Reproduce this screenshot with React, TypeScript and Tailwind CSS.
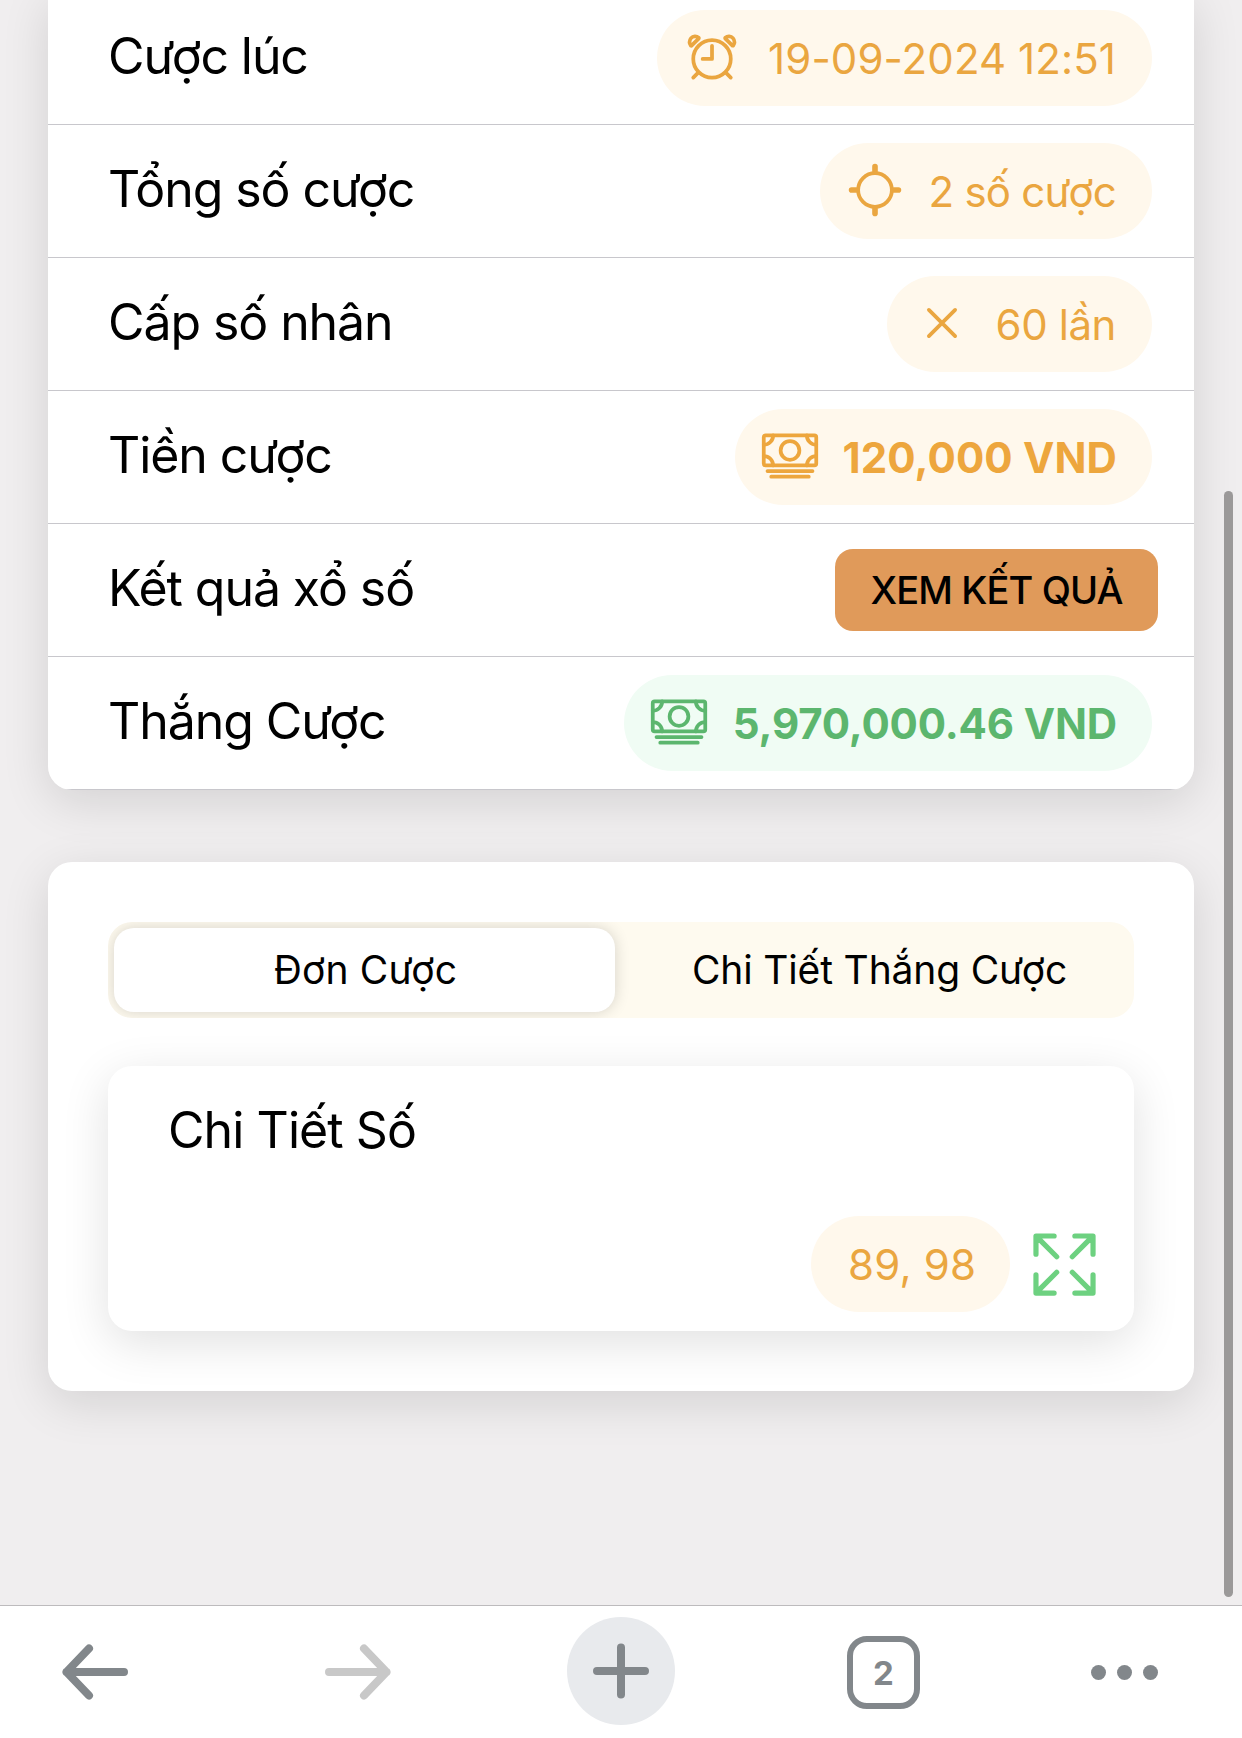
import React from 'react';
import clsx from 'clsx';
import {
  IoAlarmOutline,
  IoCashOutline,
  IoCloseOutline,
  IoExpandOutline,
  IoLocateOutline,
} from 'react-icons/io5';

function Row({
  label,
  children,
}: {
  label: string;
  children: React.ReactNode;
}): React.ReactElement {
  return (
    <div className="flex h-[133px] shrink-0 items-center justify-between border-b border-[#c8c7cc] pr-[42px] pl-[60px]">
      <span className="mb-1 text-[50px] leading-none tracking-[-1.08px] text-black">{label}</span>
      {children}
    </div>
  );
}

function Pill({
  icon,
  className,
  children,
}: {
  icon?: React.ReactNode;
  className?: string;
  children: React.ReactNode;
}): React.ReactElement {
  return (
    <div
      className={clsx(
        'flex h-24 shrink-0 items-center justify-between rounded-full pr-9 text-[42px] leading-none whitespace-nowrap',
        icon ? 'pl-[25px]' : 'pl-[37px]',
        className,
      )}
    >
      {icon}
      <span className="mt-0.5">{children}</span>
    </div>
  );
}

function BetSummary(): React.ReactElement {
  return (
    <section className="-mt-2 overflow-hidden rounded-b-3xl bg-white">
      <Row label="Cược lúc">
        <Pill
          icon={<IoAlarmOutline className="mb-0.5 size-[60px]" />}
          className="w-[495px] bg-[#fff8ec] tracking-[0.1px] text-[#eaa640]"
        >
          19-09-2024 12:51
        </Pill>
      </Row>
      <Row label="Tổng số cược">
        <Pill
          icon={<IoLocateOutline className="mb-0.5 size-[60px]" />}
          className="w-[332px] bg-[#fff8ec] tracking-[-0.75px] text-[#eaa640]"
        >
          2 số cược
        </Pill>
      </Row>
      <Row label="Cấp số nhân">
        <Pill
          icon={<IoCloseOutline className="mb-0.5 size-[60px]" />}
          className="w-[265px] bg-[#fff8ec] tracking-[-0.42px] text-[#eaa640]"
        >
          60 lần
        </Pill>
      </Row>
      <Row label="Tiền cược">
        <Pill
          icon={<IoCashOutline className="mb-0.5 size-[60px]" />}
          className="w-[417px] bg-[#fff8ec] pr-[35px] font-bold tracking-[0.13px] text-[#eda63d]"
        >
          120,000 VND
        </Pill>
      </Row>
      <Row label="Kết quả xổ số">
        <button className="-mr-1.5 h-[82px] w-[323px] rounded-[18px] bg-[#e09a5a] text-[38px] leading-none font-medium tracking-[-0.89px] text-black">
          XEM KẾT QUẢ
        </button>
      </Row>
      <Row label="Thắng Cược">
        <Pill
          icon={<IoCashOutline className="mb-0.5 size-[60px]" />}
          className="w-[528px] bg-[#f0fcf4] pr-[35px] font-bold tracking-[-0.15px] text-[#5cb66e]"
        >
          5,970,000.46 VND
        </Pill>
      </Row>
    </section>
  );
}

function BetDetails(): React.ReactElement {
  return (
    <section className="mt-[72px] h-[529px] rounded-3xl bg-white p-[60px] shadow-[0_12px_48px_rgba(0,0,0,0.12)]">
      <div className="flex h-24 overflow-hidden rounded-3xl bg-[#fefaef] p-1.5 text-[39px] leading-none">
        <button className="w-[501px] rounded-[20px] bg-white pb-0.5 pl-0.5 tracking-[0.14px] shadow-[0_0_15px_rgba(0,0,0,0.16)]">
          Đơn Cược
        </button>
        <button className="ml-4 flex-1 pb-0.5 tracking-[-0.15px]">Chi Tiết Thắng Cược</button>
      </div>
      <div className="mt-12 flex h-[265px] flex-col justify-between rounded-3xl bg-white pt-[39px] pr-7 pb-[19px] pl-[60px] shadow-[0_12px_48px_rgba(0,0,0,0.12)]">
        <h2 className="text-[50px] leading-none tracking-[-0.93px]">Chi Tiết Số</h2>
        <div className="flex items-center justify-end gap-[13px]">
          <Pill className="w-[199px] bg-[#fff8ec] tracking-[0.22px] text-[#eaa640]">89, 98</Pill>
          <IoExpandOutline className="size-[83px] text-[#6dd180]" />
        </div>
      </div>
    </section>
  );
}

function BrowserBar(): React.ReactElement {
  return (
    <nav className="flex h-[133px] shrink-0 items-start border-t border-[#bdbbbd] bg-white pt-[11px] pl-[62px] text-[#82878b]">
      <div className="flex h-[110px] items-center">
        <svg width="68" height="58" viewBox="0 0 68 58" fill="none" stroke="currentColor" strokeWidth="8" strokeLinecap="round" strokeLinejoin="round">
          <path d="M27 5.5 L4.500 29 L27 52.500 M4.500 29 H62" />
        </svg>
      </div>
      <div className="ml-[195px] flex h-[110px] items-center text-[#c8c8c8]">
        <svg width="68" height="58" viewBox="0 0 68 58" fill="none" stroke="currentColor" strokeWidth="8" strokeLinecap="round" strokeLinejoin="round">
          <path d="M39 5.5 L61.500 29 L39 52.500 M61.500 29 H4" />
        </svg>
      </div>
      <div className="ml-[174px] flex size-[108px] items-center justify-center rounded-full bg-[#e8eaed]">
        <svg width="56" height="56" viewBox="0 0 56 56" stroke="currentColor" strokeWidth="8" strokeLinecap="round">
          <path d="M28 4.500 V51.500 M4 28 H52" />
        </svg>
      </div>
      <div className="ml-[172px] flex h-[110px] items-center">
        <div className="flex size-[73px] items-center justify-center rounded-[20px] border-[6px] border-current pt-0.5 text-[33px] leading-none font-bold">
          2
        </div>
      </div>
      <div className="ml-[171px] flex h-[110px] items-center gap-[11px]">
        <span className="size-[15px] rounded-full bg-current" />
        <span className="size-[15px] rounded-full bg-current" />
        <span className="size-[15px] rounded-full bg-current" />
      </div>
    </nav>
  );
}

export default function App(): React.ReactElement {
  return (
    <div className="relative flex h-[1738px] w-[1242px] flex-col overflow-hidden bg-[#f0eeef] font-['Inter','Noto_Sans',sans-serif] text-black">
      <main className="flex-1 px-12">
        <div className="rounded-b-3xl shadow-[0_12px_48px_rgba(0,0,0,0.12)]">
          <BetSummary />
        </div>
        <BetDetails />
      </main>
      <BrowserBar />
      <div className="absolute top-[491px] right-[9px] h-[1106px] w-[9px] rounded-full bg-[#9b9999]" />
    </div>
  );
}
